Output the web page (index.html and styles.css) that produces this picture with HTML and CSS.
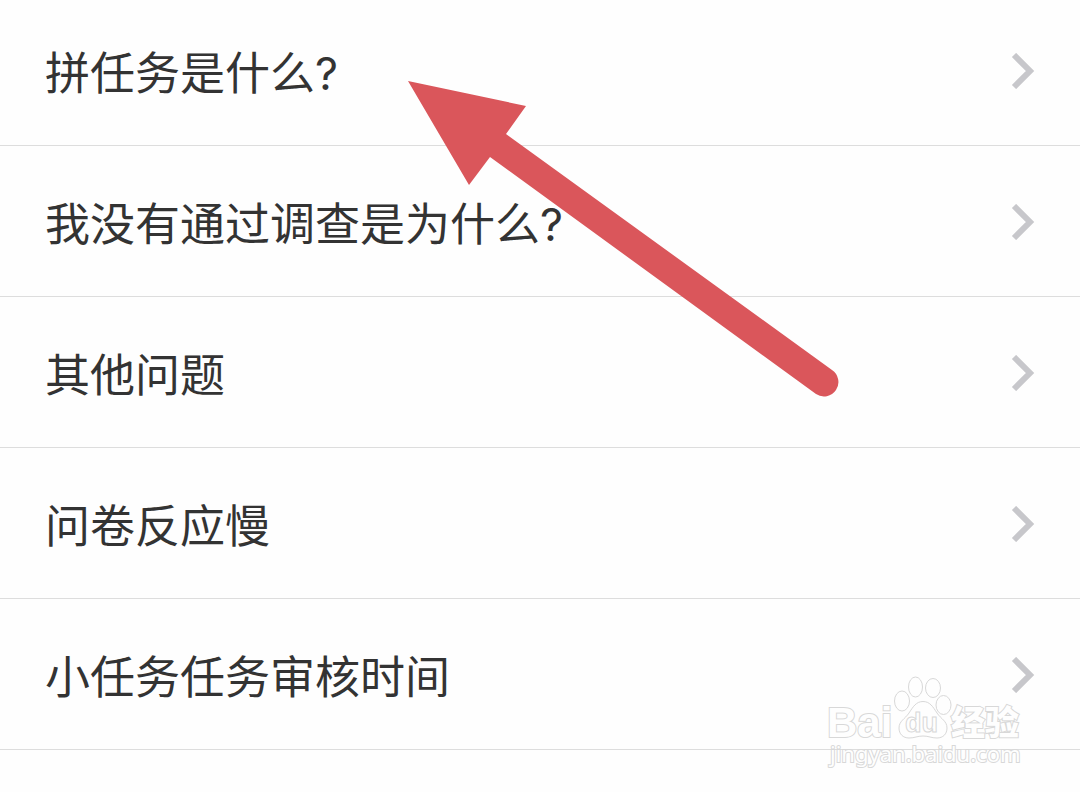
FILE: index.html
```html
<!DOCTYPE html>
<html lang="zh-CN">
<head>
<meta charset="utf-8">
<meta name="viewport" content="width=device-width, initial-scale=1">
<title>常见问题</title>
<link rel="stylesheet" href="styles.css">
</head>
<body>
<main class="page">
  <ul class="faq">
    <li><a class="faq-row" href="#q1"><span class="faq-title">拼任务是什么?</span><svg class="chevron" viewBox="0 0 24 36" aria-hidden="true"><path d="M3 2 19 18 3 34"/></svg></a></li>
    <li><a class="faq-row" href="#q2"><span class="faq-title">我没有通过调查是为什么?</span><svg class="chevron" viewBox="0 0 24 36" aria-hidden="true"><path d="M3 2 19 18 3 34"/></svg></a></li>
    <li><a class="faq-row" href="#q3"><span class="faq-title">其他问题</span><svg class="chevron" viewBox="0 0 24 36" aria-hidden="true"><path d="M3 2 19 18 3 34"/></svg></a></li>
    <li><a class="faq-row" href="#q4"><span class="faq-title">问卷反应慢</span><svg class="chevron" viewBox="0 0 24 36" aria-hidden="true"><path d="M3 2 19 18 3 34"/></svg></a></li>
    <li><a class="faq-row" href="#q5"><span class="faq-title">小任务任务审核时间</span><svg class="chevron" viewBox="0 0 24 36" aria-hidden="true"><path d="M3 2 19 18 3 34"/></svg></a></li>
  </ul>
  <svg class="pointer" viewBox="0 0 432 318" aria-hidden="true">
    <path d="M0 1 118 26 98 54 424 290A14 14 0 0 1 408 314L82 77 61 105Z"/>
  </svg>
  <svg class="watermark" viewBox="0 0 200 100" role="img" aria-label="Baidu 经验 jingyan.baidu.com">
    <g class="mark-outline">
      <text class="mark-latin" x="-3" y="67">Bai</text>
      <ellipse cx="72" cy="31" rx="7.5" ry="10"/>
      <ellipse cx="85.5" cy="17" rx="7" ry="10"/>
      <ellipse cx="103" cy="18" rx="7.5" ry="9.5"/>
      <ellipse cx="113.5" cy="35" rx="7.5" ry="9.5"/>
      <path d="M93 31.5C86 31.5 83 37 79 43C75 49 69 51 69 58C69 64 73 68 79 68C85 68 87 66 93 66C99 66 101 68 107 68C113 68 117 64 117 58C117 51 111 49 107 43C103 37 100 31.5 93 31.5Z"/>
      <text class="mark-du" x="75" y="62">du</text>
      <text class="mark-cjk" x="121" y="65">经验</text>
      <text class="mark-url" x="0" y="92">jingyan.baidu.com</text>
    </g>
  </svg>
</main>
</body>
</html>
```
FILE: styles.css
```css
* {
  box-sizing: border-box;
}

body {
  margin: 0;
  background: #fefefe;
  color: #333;
  font-family: Inter, "Noto Sans CJK SC", sans-serif;
}

.page {
  position: relative;
  min-height: 100vh;
  overflow: hidden;
}

.faq {
  margin: -5px 0 0;
  padding: 0;
  list-style: none;
}

.faq-row {
  display: flex;
  align-items: center;
  justify-content: space-between;
  gap: 24px;
  padding: 43px 45px 41px;
  border-bottom: 1px solid #ddd;
  color: inherit;
  text-decoration: none;
}

.faq-title {
  padding-top: 6px;
  font-size: 45px;
  line-height: 60px;
}

.chevron {
  flex: none;
  width: 24px;
  height: 36px;
  fill: none;
  stroke: #c7c7cb;
  stroke-width: 6;
}

.pointer {
  position: absolute;
  left: 408px;
  top: 80px;
  width: 432px;
  height: 318px;
  fill: #da565b;
}

.watermark {
  position: absolute;
  right: 50px;
  top: 670px;
  width: 200px;
  height: 100px;
  overflow: visible;
}

.mark-outline {
  fill: #fefefe;
  stroke: #d8d8d8;
  stroke-width: 1;
}

.mark-latin {
  font: bold 42px "Liberation Sans", sans-serif;
  stroke-width: 2;
  paint-order: stroke;
}

.mark-du {
  font: bold 27px "Liberation Sans", sans-serif;
}

.mark-cjk {
  font: 900 34px "Noto Sans CJK SC", sans-serif;
  stroke-width: 2;
  paint-order: stroke;
}

.mark-url {
  font: 22px "Noto Sans", sans-serif;
  stroke-width: 2;
  paint-order: stroke;
}
```
